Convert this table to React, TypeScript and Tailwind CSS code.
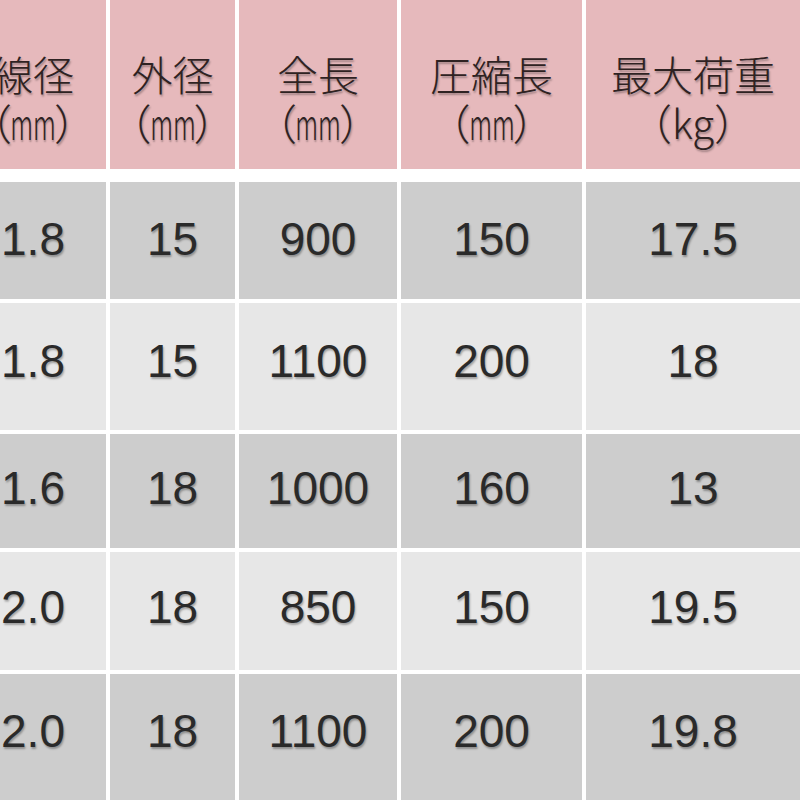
import React from "react";

const cols = [
  { w: "w-[146px]", h1: "線径", unit: "mm" },
  { w: "w-[125px]", h1: "外径", unit: "mm" },
  { w: "w-[158px]", h1: "全長", unit: "mm" },
  { w: "w-[181px]", h1: "圧縮長", unit: "mm" },
  { w: "w-[214px]", h1: "最大荷重", unit: "kg" },
];

const rows = [
  { h: "h-[117px]", pb: "pb-[4px]", bg: "bg-[#cdcdcd]", v: ["1.8", "15", "900", "150", "17.5"] },
  { h: "h-[127px]", pb: "pb-[12px]", bg: "bg-[#e7e7e7]", v: ["1.8", "15", "1100", "200", "18"] },
  { h: "h-[114px]", pb: "pb-[6px]", bg: "bg-[#cdcdcd]", v: ["1.6", "18", "1000", "160", "13"] },
  { h: "h-[118px]", pb: "pb-[8px]", bg: "bg-[#e7e7e7]", v: ["2.0", "18", "850", "150", "19.5"] },
  { h: "h-[126px]", pb: "pb-[12px]", bg: "bg-[#cdcdcd]", v: ["2.0", "18", "1100", "200", "19.8"] },
];

const shadow = "[text-shadow:1px_2px_2px_rgba(0,0,0,0.3)]";

export default function App() {
  return (
    <div className="w-[800px] h-[800px] overflow-hidden bg-white">
      <div className="ml-[-40px] w-[840px] flex flex-col">
        <div className="flex gap-[4px] h-[169px]">
          {cols.map((c, i) => (
            <div
              key={i}
              className={`${c.w} shrink-0 bg-[#e6b9bc] flex flex-col items-center pt-[49px] text-[#2e2222] font-light ${shadow}`}
              style={{ fontFamily: '"Noto Sans CJK JP", "Noto Sans", sans-serif' }}
            >
              <div className="text-[41px] leading-[48px] whitespace-nowrap">{c.h1}</div>
              <div className="text-[42px] leading-[50px] whitespace-nowrap flex items-center">
                <span>（</span>
                {c.unit === "mm" ? (
                  <span className="inline-flex w-[42px] justify-center">
                    <span className="inline-block scale-x-[0.6]">mm</span>
                  </span>
                ) : (
                  <span className="text-[40px]">kg</span>
                )}
                <span>）</span>
              </div>
            </div>
          ))}
        </div>
        <div className="h-[13px]" />
        <div className="flex flex-col gap-[4px]">
          {rows.map((r, ri) => (
            <div key={ri} className={`flex gap-[4px] ${r.h}`}>
              {cols.map((c, ci) => (
                <div
                  key={ci}
                  className={`${c.w} shrink-0 ${r.bg} flex items-center justify-center ${r.pb} text-[46px] leading-none text-[#2a2a2a] ${shadow}`}
                  style={{ fontFamily: '"Liberation Sans", Arial, sans-serif' }}
                >
                  {r.v[ci]}
                </div>
              ))}
            </div>
          ))}
        </div>
      </div>
    </div>
  );
}
